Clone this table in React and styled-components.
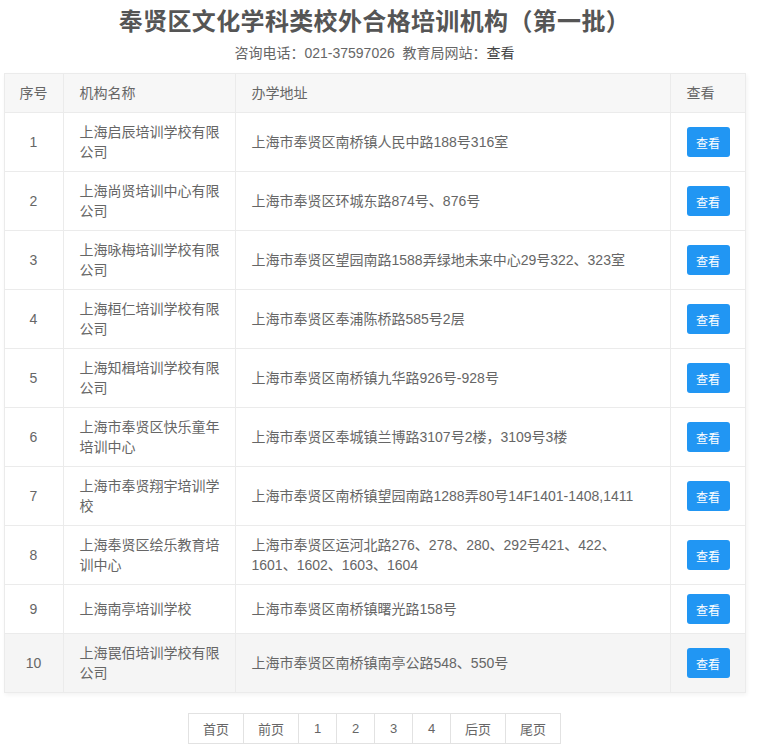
import React from "react";
import styled, { createGlobalStyle } from "styled-components";

const Global = createGlobalStyle`
  html, body { margin: 0; padding: 0; background: #fff; }
  body { font-family: "Liberation Sans", "Noto Sans CJK SC", sans-serif; color: #666; }
`;

const Page = styled.div`
  width: 741px;
  margin: 0 12px 0 4px;
  display: flex;
  flex-direction: column;
  align-items: center;
`;

const Title = styled.h1`
  margin: 4px 0 0;
  font-size: 24px;
  line-height: 32px;
  font-weight: 700;
  letter-spacing: 0.35px;
  color: #555;
  font-family: "Noto Sans CJK SC", sans-serif;
`;

const Sub = styled.div`
  margin-top: 7px;
  font-size: 14px;
  line-height: 20px;
  color: #666;
`;

const SubLink = styled.span`
  color: #444;
`;

const Table = styled.table`
  margin-top: 10px;
  width: 741px;
  table-layout: fixed;
  border-collapse: collapse;
  border: 1px solid #e8e8e8;
  box-shadow: 1px 2px 4px rgba(0, 0, 0, 0.05);
  font-size: 14px;
  line-height: 20px;
`;

const Th = styled.th`
  background: #f7f7f7;
  font-weight: 400;
  color: #666;
  padding: 9px ${(p) => p.$pr || "8px"} 9px ${(p) => (p.$center ? "4px" : "16px")};
  text-align: ${(p) => (p.$center ? "center" : "left")};
  white-space: nowrap;
  border: 1px solid #ebebeb;
`;

const Tr = styled.tr`
  background: ${(p) => (p.$shade ? "#f5f5f5" : "#fff")};
`;

const Td = styled.td`
  padding: 9px ${(p) => p.$pr || "8px"} 9px ${(p) => (p.$center ? "4px" : "16px")};
  vertical-align: middle;
  text-align: ${(p) => (p.$center ? "center" : "left")};
  border: 1px solid #ebebeb;
  color: #666;
`;

const ViewBtn = styled.button`
  display: block;
  width: 43px;
  height: 30px;
  padding: 0;
  border: none;
  border-radius: 3px;
  background: #2196f3;
  color: #fff;
  font-size: 12px;
  font-family: "Noto Sans CJK SC", sans-serif;
  cursor: pointer;
`;

const Pager = styled.div`
  margin-top: 20px;
  display: flex;
  border: 1px solid #e2e2e2;
  border-right: none;
`;

const PageItem = styled.div`
  width: ${(p) => (p.$wide ? "54px" : "37px")};
  height: 29px;
  display: flex;
  align-items: center;
  justify-content: center;
  border-right: 1px solid #e2e2e2;
  font-size: 13px;
  color: #666;
`;

const rows = [
  ["上海启辰培训学校有限公司", "上海市奉贤区南桥镇人民中路188号316室"],
  ["上海尚贤培训中心有限公司", "上海市奉贤区环城东路874号、876号"],
  ["上海咏梅培训学校有限公司", "上海市奉贤区望园南路1588弄绿地未来中心29号322、323室"],
  ["上海桓仁培训学校有限公司", "上海市奉贤区奉浦陈桥路585号2层"],
  ["上海知楫培训学校有限公司", "上海市奉贤区南桥镇九华路926号-928号"],
  ["上海市奉贤区快乐童年培训中心", "上海市奉贤区奉城镇兰博路3107号2楼，3109号3楼"],
  ["上海市奉贤翔宇培训学校", "上海市奉贤区南桥镇望园南路1288弄80号14F1401-1408,1411"],
  ["上海奉贤区绘乐教育培训中心", "上海市奉贤区运河北路276、278、280、292号421、422、1601、1602、1603、1604"],
  ["上海南亭培训学校", "上海市奉贤区南桥镇曙光路158号"],
  ["上海罠佰培训学校有限公司", "上海市奉贤区南桥镇南亭公路548、550号"],
];

const pages = [
  ["首页", true],
  ["前页", true],
  ["1"],
  ["2"],
  ["3"],
  ["4"],
  ["后页", true],
  ["尾页", true],
];

export default function App() {
  return (
    <>
      <Global />
      <Page>
        <Title>奉贤区文化学科类校外合格培训机构（第一批）</Title>
        <Sub>
          咨询电话：021-37597026&nbsp;&nbsp;教育局网站：<SubLink>查看</SubLink>
        </Sub>
        <Table>
          <colgroup>
            <col style={{ width: 59 }} />
            <col style={{ width: 172 }} />
            <col style={{ width: 435 }} />
            <col style={{ width: 75 }} />
          </colgroup>
          <thead>
            <tr>
              <Th $center $pr="4px">序号</Th>
              <Th>机构名称</Th>
              <Th $pr="22px">办学地址</Th>
              <Th>查看</Th>
            </tr>
          </thead>
          <tbody>
            {rows.map(([name, addr], i) => (
              <Tr key={i} $shade={i === 9}>
                <Td $center $pr="4px">{i + 1}</Td>
                <Td>{name}</Td>
                <Td $pr="22px">{addr}</Td>
                <Td>
                  <ViewBtn>查看</ViewBtn>
                </Td>
              </Tr>
            ))}
          </tbody>
        </Table>
        <Pager>
          {pages.map(([label, wide]) => (
            <PageItem key={label} $wide={wide}>
              {label}
            </PageItem>
          ))}
        </Pager>
      </Page>
    </>
  );
}
